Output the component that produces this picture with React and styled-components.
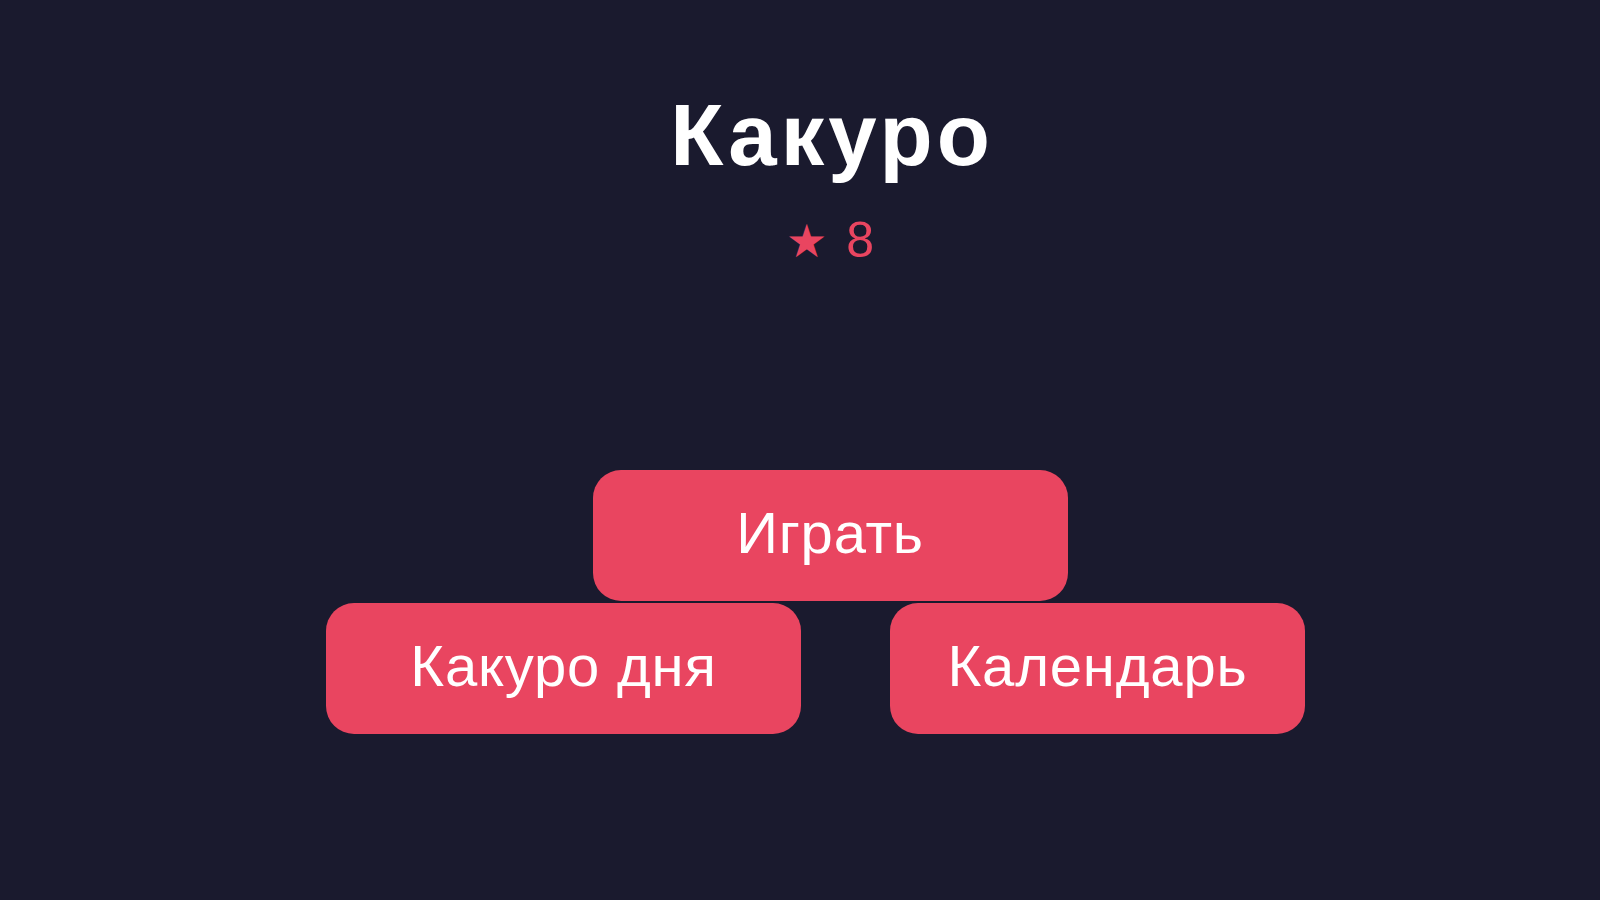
import styled, { createGlobalStyle } from 'styled-components';

const GlobalStyle = createGlobalStyle`
  html, body {
    margin: 0;
    padding: 0;
    background: #1a1a2e;
  }
  body {
    font-family: "Liberation Sans", Arial, sans-serif;
  }
`;

const Screen = styled.main`
  width: 1600px;
  height: 900px;
  box-sizing: border-box;
  padding: 91px 0 0 60px;
  display: flex;
  flex-direction: column;
  align-items: center;
  background: #1a1a2e;
  overflow: hidden;
`;

const Title = styled.h1`
  margin: 0;
  padding-left: 4px;
  font-size: 87px;
  line-height: 1;
  font-weight: 700;
  letter-spacing: 4px;
  color: #ffffff;
`;

const Rating = styled.div`
  margin-top: 37px;
  display: flex;
  align-items: baseline;
  gap: 19px;
  font-size: 50px;
  line-height: 1;
  color: #e94560;
`;

const Star = styled.span`
  font-family: "DejaVu Sans", sans-serif;
  font-size: 46px;
`;

const Menu = styled.nav`
  margin-top: 205px;
  display: flex;
  flex-direction: column;
  align-items: center;
  gap: 2px;
`;

const Row = styled.div`
  display: flex;
  gap: 89px;
  margin-right: ${({ $shift }) => $shift || 0}px;
`;

const MenuButton = styled.button`
  width: ${({ $w }) => $w}px;
  height: 131px;
  border: none;
  border-radius: 28px;
  background: #e94560;
  color: #ffffff;
  font-family: "Liberation Sans", Arial, sans-serif;
  font-size: 58px;
  letter-spacing: 0.8px;
  display: flex;
  align-items: center;
  justify-content: center;
  padding: 0 0 6px;
  cursor: pointer;
`;

export default function App() {
  return (
    <>
      <GlobalStyle />
      <Screen>
        <Title>Какуро</Title>
        <Rating>
          <Star>★</Star>
          <span>8</span>
        </Rating>
        <Menu>
          <MenuButton $w={475}>Играть</MenuButton>
          <Row $shift={29}>
            <MenuButton $w={475}>Какуро дня</MenuButton>
            <MenuButton $w={415}>Календарь</MenuButton>
          </Row>
        </Menu>
      </Screen>
    </>
  );
}
